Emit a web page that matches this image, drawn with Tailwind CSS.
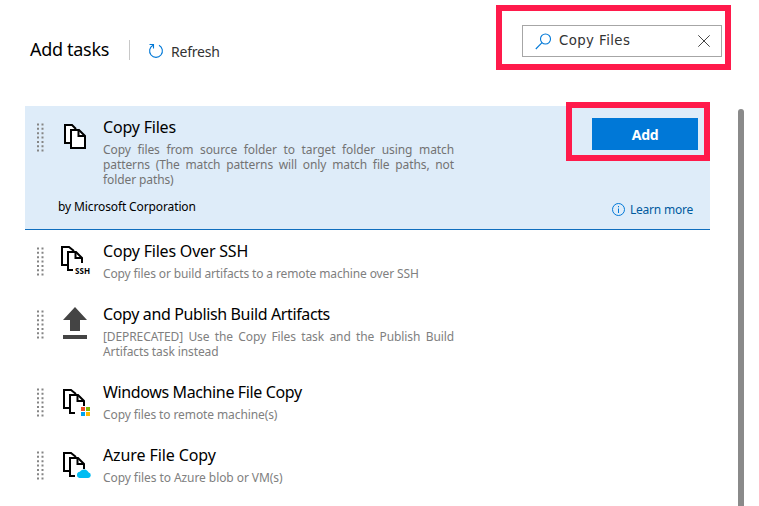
<!DOCTYPE html>
<html lang="en">
<head>
<meta charset="utf-8">
<title>Add tasks</title>
<script src="https://cdn.jsdelivr.net/npm/@tailwindcss/browser@4"></script>
</head>
<body class="relative w-[759px] h-[506px] overflow-hidden bg-white font-['Noto_Sans',sans-serif] text-black">
<svg class="absolute size-0">
  <defs>
    <symbol id="grip" viewBox="0 0 7 29">
      <path d="M1 .5V29M5.500 .5V29" stroke="#858585" stroke-width="2" stroke-dasharray="2 2.350"/>
    </symbol>
    <symbol id="files" viewBox="0 0 24 26">
      <path d="M6 19H1V1h7l4 4" fill="#fff" stroke="#000" stroke-width="2"/>
      <path d="M7 6h8l6 6v12H7z" fill="#fff" stroke="#000" stroke-width="2"/>
      <path d="M14.500 6v6H21" fill="none" stroke="#000" stroke-width="2"/>
    </symbol>
    <symbol id="files-open" viewBox="0 0 24 26">
      <path d="M6 19H1V1h7l5 4" fill="#fff" stroke="#000" stroke-width="2"/>
      <path d="M12 24H7V6h8l6 6v5" fill="#fff" stroke="#000" stroke-width="2"/>
      <path d="M14.500 6v6H21" fill="none" stroke="#000" stroke-width="2"/>
    </symbol>
  </defs>
</svg>

<header class="flex h-[106px] pl-[30px] pr-[37px] pt-[25px]">
  <h1 class="mt-[11px] w-[99px] text-[18px] leading-[26px] whitespace-nowrap tracking-[-0.3px]">Add tasks</h1>
  <div class="mt-[15px] h-5 w-px bg-[#c8c8c8]"></div>
  <button class="mt-[15px] ml-[18px] flex h-[22px] items-center text-[14px] text-[#333] whitespace-nowrap">
    <svg class="mr-[7px] -mt-px" width="16" height="16" viewBox="0 0 16 16" fill="none" stroke="#0078d7" stroke-width="1.1"><path d="M11 2.300A6.400 6.400 0 1 1 5 2.300M1.500 1.500H5.500V5.500"/></svg>
    <span class="mt-px tracking-[-0.2px]">Refresh</span>
  </button>
  <div class="ml-auto flex h-8 w-[200px] items-center border border-[#a6a6a6] pl-3 pr-[11px] text-[#333]">
    <svg width="17" height="17" viewBox="0 0 17 17" fill="none" stroke="#0078d7" stroke-width="1.1"><circle cx="10.500" cy="6" r="5"/><path d="M7 9.700.8 16"/></svg>
    <span class="ml-[7px] -mt-px font-['DejaVu_Sans',sans-serif] text-[13.333px] tracking-[0.4px]">Copy Files</span>
    <svg class="ml-auto" width="12" height="12" viewBox="0 0 12 12" stroke="#444" stroke-width="1"><path d="M.3.3 11.700 11.700M11.700.3.3 11.700"/></svg>
  </div>
</header>

<main class="ml-[25px] w-[685px]">
  <article class="flex h-[124px] flex-col border-b border-[#106ebe] bg-[#deecf9]">
    <div class="flex">
      <svg class="mt-[17px] ml-3 shrink-0" width="7" height="29"><use href="#grip"/></svg>
      <svg class="mt-[18px] ml-5 w-6 shrink-0" width="24" height="26"><use href="#files"/></svg>
      <div class="ml-[15px] w-[351px] pt-[10px]">
        <h2 class="text-[16px] leading-[22px] whitespace-nowrap tracking-[-0.2px]">Copy Files</h2>
        <p class="mt-1 text-[12px] leading-[15px] text-[#737373] whitespace-nowrap tracking-[-0.1px]">
          <span class="block [text-align-last:justify]">Copy files from source folder to target folder using match</span>
          <span class="block [text-align-last:justify]">patterns (The match patterns will only match file paths, not</span>
          <span class="block">folder paths)</span>
        </p>
      </div>
      <button class="mt-3 ml-auto mr-3 h-8 w-[106px] bg-[#0078d7] text-[14px] font-bold text-white tracking-[-0.3px]">Add</button>
    </div>
    <div class="mt-auto flex items-center pr-[17px] pl-[33px] pb-[10px] text-[12px] leading-[18px]">
      <span class="-mt-[7px] tracking-[-0.12px]">by Microsoft Corporation</span>
      <a class="ml-auto flex items-center gap-[5px] text-[#005a9e]">
        <svg class="-mt-px" width="13" height="13" viewBox="0 0 13 13" fill="none" stroke="#0078d7"><circle cx="6.500" cy="6.500" r="6"/><path d="M6.500 5.500v4.500M6.500 3v1.300"/></svg>
        <span class="tracking-[-0.22px]">Learn more</span>
      </a>
    </div>
  </article>

  <article class="flex h-[63px]">
    <svg class="mt-[17px] ml-3 shrink-0" width="7" height="29"><use href="#grip"/></svg>
    <svg class="mt-4 ml-[17px] shrink-0" width="30" height="30"><use href="#files-open" width="24" height="26"/><text x="14" y="27.500" class="text-[8px] font-bold font-['Noto_Sans',sans-serif]" textLength="15">SSH</text></svg>
    <div class="ml-3 w-[351px] pt-[10px]">
      <h2 class="text-[16px] leading-[22px] whitespace-nowrap tracking-[-0.2px]">Copy Files Over SSH</h2>
      <p class="mt-1 text-[12px] leading-[15px] text-[#808080] whitespace-nowrap tracking-[-0.13px]">Copy files or build artifacts to a remote machine over SSH</p>
    </div>
  </article>

  <article class="flex h-[78px]">
    <svg class="mt-[17px] ml-3 shrink-0" width="7" height="29"><use href="#grip"/></svg>
    <svg class="mt-[14px] ml-[19px] shrink-0" width="24" height="32" viewBox="0 0 24 32" fill="#444"><path d="M12 0 24 13H17V24H7V13H0zM0 28H24V32H0z"/></svg>
    <div class="ml-4 w-[351px] pt-[10px]">
      <h2 class="text-[16px] leading-[22px] whitespace-nowrap tracking-[-0.37px]">Copy and Publish Build Artifacts</h2>
      <p class="mt-1 text-[12px] leading-[15px] text-[#808080] whitespace-nowrap tracking-[-0.1px]">
        <span class="block [text-align-last:justify]">[DEPRECATED] Use the Copy Files task and the Publish Build</span>
        <span class="block">Artifacts task instead</span>
      </p>
    </div>
  </article>

  <article class="flex h-[63px]">
    <svg class="mt-[17px] ml-3 shrink-0" width="7" height="29"><use href="#grip"/></svg>
    <svg class="mt-[18px] ml-[19px] shrink-0" width="28" height="28"><use href="#files-open" width="24" height="26"/><path d="M17 17h11v11H17z" fill="#fff"/><path d="M18 18h4v4h-4z" fill="#f25022"/><path d="M23 18h4v4h-4z" fill="#7fba00"/><path d="M18 23h4v4h-4z" fill="#00a4ef"/><path d="M23 23h4v4h-4z" fill="#ffb900"/></svg>
    <div class="ml-3 w-[351px] pt-[10px]">
      <h2 class="text-[16px] leading-[22px] whitespace-nowrap tracking-[-0.37px]">Windows Machine File Copy</h2>
      <p class="mt-1 text-[12px] leading-[15px] text-[#808080] whitespace-nowrap tracking-[-0.1px]">Copy files to remote machine(s)</p>
    </div>
  </article>

  <article class="flex h-[63px]">
    <svg class="mt-[17px] ml-3 shrink-0" width="7" height="29"><use href="#grip"/></svg>
    <svg class="mt-[18px] ml-[19px] shrink-0" width="28" height="28"><use href="#files-open" width="24" height="26"/><path d="M16.500 26a3.200 3.200 0 0 1 .3-6.300 5.200 5.200 0 0 1 8.900.8 2.800 2.800 0 0 1-.5 5.500z" fill="#00bcf2"/></svg>
    <div class="ml-3 w-[351px] pt-[10px]">
      <h2 class="text-[16px] leading-[22px] whitespace-nowrap tracking-[-0.1px]">Azure File Copy</h2>
      <p class="mt-1 text-[12px] leading-[15px] text-[#808080] whitespace-nowrap tracking-[-0.07px]">Copy files to Azure blob or VM(s)</p>
    </div>
  </article>
</main>

<div class="absolute top-[109px] left-[738px] h-[420px] w-1.5 rounded-full bg-[#8a8a8a]"></div>
<div class="absolute top-[5px] left-[496px] h-[65px] w-[235px] border-6 border-[#ff1a4b]"></div>
<div class="absolute top-[102px] left-[566px] h-[59px] w-36 border-6 border-[#ff1a4b]"></div>
</body>
</html>
